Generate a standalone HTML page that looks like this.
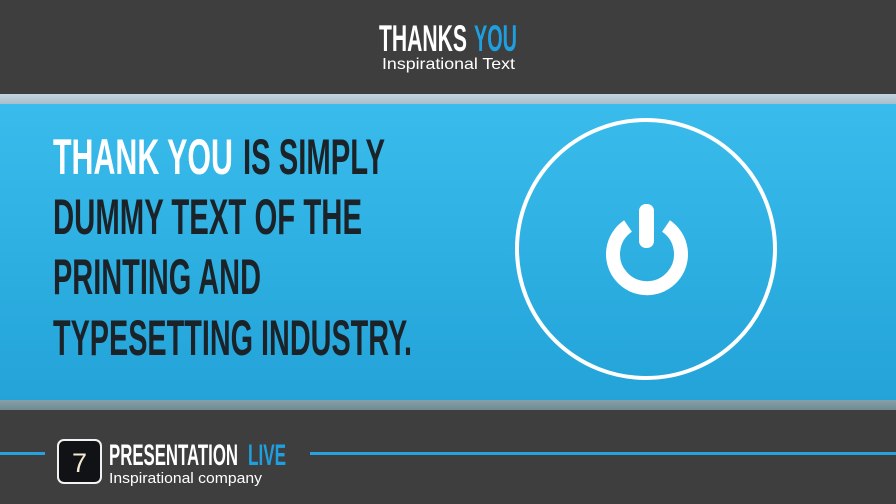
<!DOCTYPE html>
<html><head><meta charset="utf-8"><style>
html,body{margin:0;padding:0}
body{width:896px;height:504px;overflow:hidden;background:#3e3e3e;position:relative;font-family:"Liberation Sans",sans-serif}
.s1{position:absolute;left:0;top:94px;width:896px;height:10px;background:linear-gradient(#c2d3df,#a9bdcb)}
.blue{position:absolute;left:0;top:104px;width:896px;height:296px;background:linear-gradient(#39bcec,#23a3d8)}
.s2{position:absolute;left:0;top:400px;width:896px;height:10px;background:linear-gradient(#86a0aa,#6f8a93)}
svg{position:absolute;left:0;top:0}
</style></head><body>
<div class="s1"></div><div class="blue"></div><div class="s2"></div>
<svg width="896" height="504" viewBox="0 0 896 504">
  <g font-family="Liberation Sans, sans-serif" font-weight="bold">
    <text x="379" y="51" font-size="37" textLength="88" lengthAdjust="spacingAndGlyphs" fill="#fff">THANKS</text>
    <text x="474" y="51" font-size="37" textLength="43" lengthAdjust="spacingAndGlyphs" fill="#1ea0e0">YOU</text>
    <text x="53" y="174" font-size="50" textLength="180" lengthAdjust="spacingAndGlyphs" fill="#fff">THANK YOU</text>
    <text x="243" y="174" font-size="50" textLength="142" lengthAdjust="spacingAndGlyphs" fill="#1b2228">IS SIMPLY</text>
    <text x="53" y="234" font-size="50" textLength="309" lengthAdjust="spacingAndGlyphs" fill="#1b2228">DUMMY TEXT OF THE</text>
    <text x="53" y="294" font-size="50" textLength="208" lengthAdjust="spacingAndGlyphs" fill="#1b2228">PRINTING AND</text>
    <text x="53" y="355" font-size="50" textLength="359" lengthAdjust="spacingAndGlyphs" fill="#1b2228">TYPESETTING INDUSTRY.</text>
    <text x="109" y="465" font-size="30" textLength="129" lengthAdjust="spacingAndGlyphs" fill="#fff">PRESENTATION</text>
    <text x="248" y="465" font-size="30" textLength="38" lengthAdjust="spacingAndGlyphs" fill="#1ea0e0">LIVE</text>
  </g>
  <text x="382" y="69" font-size="16" textLength="133" lengthAdjust="spacingAndGlyphs" fill="#fff" font-family="Liberation Sans, sans-serif">Inspirational Text</text>
  <text x="109" y="483" font-size="15" textLength="153" lengthAdjust="spacingAndGlyphs" fill="#fff" font-family="Liberation Sans, sans-serif">Inspirational company</text>
  <rect x="0" y="452" width="45" height="3" fill="#27a2df"/>
  <rect x="310" y="452" width="586" height="3" fill="#27a2df"/>
  <rect x="58" y="440" width="43" height="43" rx="6" fill="#101215" stroke="#f2f2f2" stroke-width="2"/>
  <text x="79.5" y="472" font-size="27" text-anchor="middle" fill="#f3ead2" font-family="Liberation Sans, sans-serif">7</text>
  <circle cx="646" cy="249" r="129" fill="none" stroke="#fff" stroke-width="4"/>
  <path d="M628 226 A34 34 0 1 0 666 226" fill="none" stroke="#fff" stroke-width="14"/>
  <rect x="639" y="204" width="15" height="44" rx="7" fill="#fff"/>
</svg>
</body></html>
